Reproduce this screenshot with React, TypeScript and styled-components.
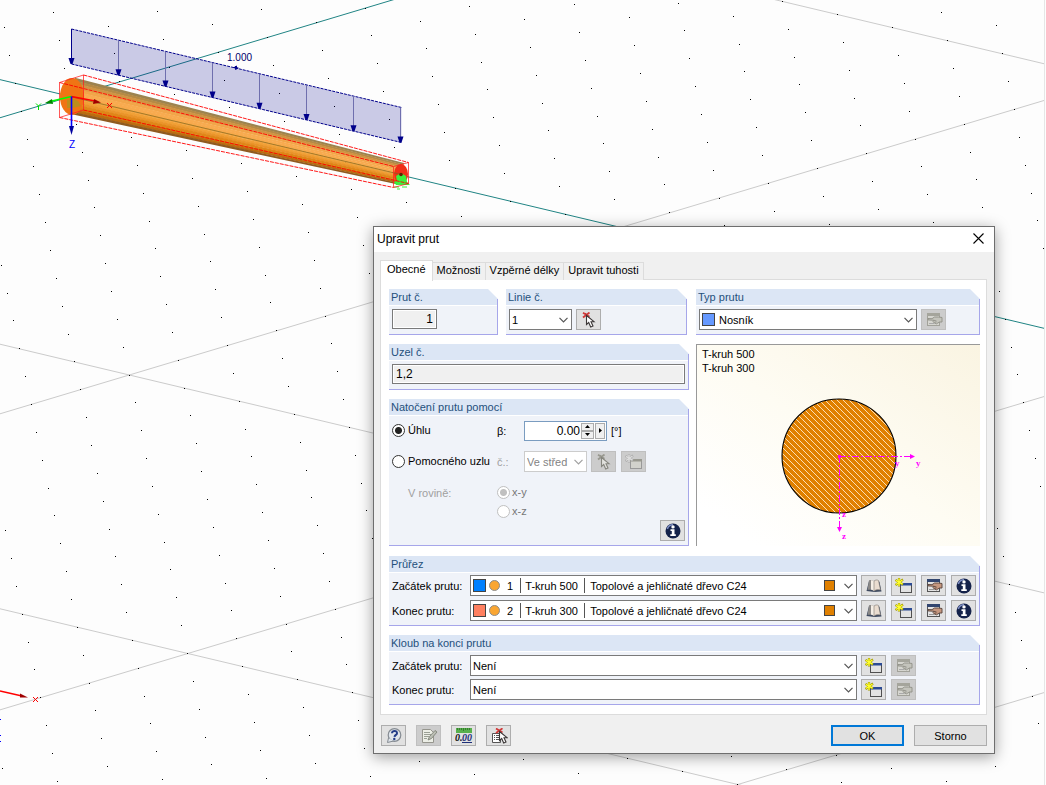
import React from "react";
import styled, { createGlobalStyle, css } from "styled-components";

const GlobalStyle = createGlobalStyle`
  *, *::before, *::after { box-sizing: border-box; }
  html, body, #root { height: 100%; }
  body {
    margin: 0;
    overflow: hidden;
    background: #fdfdfd;
    color: #000;
    font: 11px/14px "Liberation Sans", Arial, sans-serif;
  }
  button, input, select { font: inherit; color: inherit; margin: 0; }
`;

/* ---------- workspace ---------- */

const Workspace = styled.main`
  position: relative;
  min-height: 100vh;
  margin-right: 1px;
  overflow: hidden;
  border-right: 1px solid #e6e6e6;
`;

const Scene = styled.svg`
  position: absolute;
  inset: 0;
  width: 100%;
  height: 100%;
`;

const O = { x: 70.8, y: 96.5 };
const U = { x: 55, y: 13.1 };
const V = { x: 49.15, y: -14.75 };
const gridPoint = (i: number, j: number) => ({
  x: O.x + i * U.x + j * V.x,
  y: O.y + i * U.y + j * V.y,
});

const dots: { x: number; y: number }[] = [];
for (let i = -40; i <= 60; i++) {
  for (let j = -60; j <= 50; j++) {
    const p = gridPoint(i, j);
    if (p.x >= 0 && p.x < 2200 && p.y >= 0 && p.y < 1400) {
      dots.push({ x: Math.floor(p.x), y: Math.floor(p.y) });
    }
  }
}
const dotPath = dots.map((d) => `M${d.x} ${d.y}h1v1h-1z`).join("");

const gridLine = (i1: number, j1: number, i2: number, j2: number) => {
  const a = gridPoint(i1, j1);
  const b = gridPoint(i2, j2);
  return `M${a.x} ${a.y}L${b.x} ${b.y}`;
};
const majors = [-30, -20, -10, 10, 20, 30, 40];
const majorPath = majors
  .map((k) => gridLine(k, -60, k, 60) + gridLine(-60, k, 60, k))
  .join("");
const axisPath = gridLine(0, 0, 0, 60) + gridLine(0, -60, 0, 0) + gridLine(-60, 0, 60, 0);

const beamShades = [
  "#9c8350", "#b58a45", "#cf9444", "#e59d45", "#f2a549", "#f8ab50", "#f8aa4e",
  "#f6a742", "#f1a036", "#ea942a", "#e08618", "#d67c0c", "#bb6c10", "#8f5a20",
];
const beamTop = [[75, 77.8], [404, 163]];
const beamBottom = [[73, 114.5], [398, 184.5]];
const along = (t: number, end: number) =>
  `${beamTop[end][0] + (beamBottom[end][0] - beamTop[end][0]) * t} ${
    beamTop[end][1] + (beamBottom[end][1] - beamTop[end][1]) * t
  }`;

const loadArrows = [0, 1, 2, 3, 4, 5, 6, 7].map((n) => ({
  x: 71.5 + n * 47,
  y: 29 + n * 11.2,
}));

const Model = () => (
  <Scene aria-hidden="true">
    <path d={majorPath} stroke="#cbcbcb" fill="none" />
    <path d={axisPath} stroke="#208484" fill="none" />
    <path d={dotPath} fill="#000" />

    <path d="M71.5 29L401.5 107.5V142.5L71.5 64Z" fill="#00008b" fillOpacity="0.2" />
    <path d="M71.5 29L401.5 107.5M71.5 64L401.5 142.5" stroke="#00008b" strokeDasharray="3 1" />
    {loadArrows.map((a, n) => (
      <g key={a.x}>
        <path d={`M${a.x} ${a.y}v31`} stroke={n === 0 ? "#00008b" : "#6f6fae"} />
        <path d={`M${a.x - 3} ${a.y + 29}h6l-2 6h-2z`} fill="#00008b" />
      </g>
    ))}
    <path d="M233 67.5l4-2v4zM235 66l4 2-4 2z" fill="#00008b" />
    <text x="227" y="61" fontSize="10" fill="#00006b">1.000</text>

    {beamShades.map((c, n) => {
      const t1 = n / beamShades.length;
      const t2 = Math.min(1, (n + 1.2) / beamShades.length);
      return (
        <path
          key={c}
          d={`M${along(t1, 0)}L${along(t1, 1)}L${along(t2, 1)}L${along(t2, 0)}Z`}
          fill={c}
        />
      );
    })}
    <ellipse cx="72" cy="96.5" rx="12" ry="18.5" fill="#f07414" />
    <ellipse cx="401" cy="174" rx="7" ry="10" fill="#f03018" />
    <path d="M72 97L401 174.5" stroke="#7c6420" strokeWidth="0.7" />
    <path d="M67 100l4-1v9h-4zM72 98l6 3 3 5-9 2z" fill="#b8901c" opacity="0.9" />
    <path d="M396 176l5-3 5 3 1 6 3 3h-14l-2-3 3-1z" fill="#3cf03c" />
    <path d="M394 187h5M402 187h5M397 189h3" stroke="#3cf03c" />
    <circle cx="401" cy="174.5" r="1.8" fill="#602000" />

    <g fill="none" stroke="#ff2020" strokeOpacity="0.75">
      <path d="M59.5 82.5L83.5 75V110L59.5 117.5Z" />
      <path d="M393.5 166.5L408.5 162.5V183.5L393.5 187.5Z" />
    </g>
    <path
      d="M83.5 75L408.5 162.5M59.5 82.5L393.5 166.5M83.5 110L408.5 183.5M59.5 117.5L393.5 187.5"
      stroke="#ff0000"
      strokeWidth="0.9"
      strokeDasharray="4 1"
    />

    <path d="M71.5 96.5L52 101" stroke="#00ff00" strokeWidth="1.6" />
    <path d="M45 103l7-4 1 5z" fill="#008a00" />
    <path d="M71.5 96.5L95 101" stroke="#ff0000" strokeWidth="1.6" />
    <path d="M101 102.500l-8 1.500 1-5z" fill="#a00000" />
    <path d="M71.5 96.500V127" stroke="#0000ff" strokeWidth="1.6" />
    <path d="M69 126h5l-2.500 9z" fill="#0000a0" />
    <path d="M36 103.500l2.500 2.500 2.500-2.500M38.500 106v4" stroke="#00e000" fill="none" />
    <path d="M107 103l5 5M112 103l-5 5" stroke="#ff0000" />
    <text x="69" y="148" fontSize="10" fill="#0000ff">Z</text>

    <path d="M0 691L22 696" stroke="#ff0000" strokeWidth="1.4" />
    <path d="M28 697.500l-8-4v4z" fill="#a00000" />
    <path d="M33 697l5 5M38 697l-5 5" stroke="#ff0000" />
    <path d="M0 719.500h1M0 735.500h1M0 741.500h1" stroke="#0000ff" />
  </Scene>
);

/* ---------- dialog frame ---------- */

const Dialog = styled.section`
  position: absolute;
  top: 226px;
  left: 373px;
  right: 49px;
  min-width: 560px;
  background: #f0f0f0;
  border: 1px solid #6e6e6e;
  box-shadow: 0 3px 14px rgba(0, 0, 0, 0.38);
`;

const TitleBar = styled.header`
  display: flex;
  align-items: center;
  justify-content: space-between;
  height: 25px;
  padding: 0 10px 2px 3px;
  background: #fff;
`;

const Title = styled.h1`
  margin: 0;
  font-size: 12px;
  font-weight: 400;
  line-height: 16px;
`;

const CloseButton = styled.button`
  display: flex;
  padding: 0;
  border: 0;
  background: none;
`;

const Tabs = styled.div`
  display: flex;
  align-items: flex-end;
  height: 28px;
  padding: 7px 6px 0;
`;

const Tab = styled.button<{ $active?: boolean }>`
  height: ${(p) => (p.$active ? 21 : 18)}px;
  padding: 0 ${(p) => (p.$active ? 6 : 4)}px ${(p) => (p.$active ? 4 : 3)}px;
  margin-bottom: ${(p) => (p.$active ? -1 : 0)}px;
  border: 1px solid #dcdcdc;
  border-left-width: ${(p) => (p.$active ? 1 : 0)}px;
  border-bottom: 0;
  background: ${(p) => (p.$active ? "#fff" : "#f0f0f0")};
  white-space: nowrap;
  z-index: 1;
`;

const TabPanel = styled.div`
  display: flex;
  flex-direction: column;
  gap: 9px;
  margin: -1px 7px 0 6px;
  padding: 9px 6px 9px 8px;
  border: 1px solid #dcdcdc;
  background: #fff;
`;

const Columns = styled.div`
  display: grid;
  grid-template-columns: 300fr 284fr;
  gap: 7px;
  padding-bottom: 1px;
`;

const Column = styled.div`
  display: flex;
  flex-direction: column;
  gap: 9px;
`;

const PairRow = styled.div`
  display: grid;
  grid-template-columns: 109fr 181fr;
  gap: 8px;
  padding-right: 2px;
`;

const Footer = styled.footer`
  display: flex;
  justify-content: space-between;
  padding: 10px 7px 7px;
`;

const FooterGroup = styled.div`
  display: flex;
  gap: 10px;
`;

const PushButton = styled.button<{ $primary?: boolean }>`
  width: 73px;
  height: 21px;
  padding: 0;
  background: #e1e1e1;
  border: ${(p) => (p.$primary ? "2px solid #0078d7" : "1px solid #adadad")};
`;

/* ---------- groups ---------- */

const GroupBox = styled.section`
  position: relative;
  display: flex;
  flex-direction: column;
  border-bottom: 1px solid #a6a6ea;
  &::after {
    content: "";
    position: absolute;
    top: 10px;
    right: 0;
    bottom: 0;
    border-right: 1px solid #a6a6ea;
  }
`;

const GroupTitle = styled.h2`
  height: 16px;
  margin: 0 0 1px;
  padding: 0 2px;
  background: #dce6f5;
  clip-path: polygon(0 0, calc(100% - 10px) 0, 100% 10px, 100% 100%, 0 100%);
  color: #24507c;
  font-size: 11px;
  font-weight: 400;
  line-height: 16px;
`;

const GroupBody = styled.div<{ $gap?: number; $top?: number }>`
  display: flex;
  flex-direction: column;
  flex: 1;
  gap: ${(p) => p.$gap ?? 3}px;
  padding: ${(p) => p.$top ?? 3}px 4px 4px 3px;
  background: #f0f3f9;
`;

const Group = ({ title, gap, top, children }: {
  title: string; gap?: number; top?: number; children: React.ReactNode;
}) => (
  <GroupBox>
    <GroupTitle>{title}</GroupTitle>
    <GroupBody $gap={gap} $top={top}>{children}</GroupBody>
  </GroupBox>
);

/* ---------- controls ---------- */

const Row = styled.div<{ $alignTop?: boolean }>`
  display: flex;
  align-items: ${(p) => (p.$alignTop ? "flex-start" : "center")};
  gap: 4px;
  min-height: 21px;
`;

const ReadOnlyInput = styled.input<{ $narrow?: boolean }>`
  width: ${(p) => (p.$narrow ? "45px" : "100%")};
  height: 20px;
  padding: 0 3px;
  border: 1px solid #7a7a7a;
  background: #f0f0f0;
  box-shadow: inset 0 0 0 1px #fff;
  font-size: 12px;
  text-align: ${(p) => (p.$narrow ? "right" : "left")};
`;

const ComboFrame = styled.span<{ $width?: number; $disabled?: boolean }>`
  position: relative;
  display: block;
  height: 21px;
  ${(p) => (p.$width ? css`flex: none; width: ${p.$width}px;` : css`flex: 1;`)}
  color: ${(p) => (p.$disabled ? "#838383" : "#000")};
`;

const ComboSelect = styled.select<{ $indent: number }>`
  appearance: none;
  width: 100%;
  height: 100%;
  padding: 0 16px 0 ${(p) => p.$indent}px;
  border: 1px solid #7a7a7a;
  border-radius: 0;
  background: #fff;
  &:disabled { border-color: #ccc; color: inherit; opacity: 1; }
`;

const ComboArrow = styled.svg`
  position: absolute;
  top: 8px;
  right: 4px;
  pointer-events: none;
`;

const ComboDecor = styled.span`
  position: absolute;
  inset: 0 22px 0 3px;
  display: flex;
  align-items: center;
  pointer-events: none;
`;

const Swatch = styled.i<{ $color: string; $small?: boolean }>`
  width: ${(p) => (p.$small ? 11 : 13)}px;
  height: ${(p) => (p.$small ? 11 : 13)}px;
  border: 1px solid #444;
  background: ${(p) => p.$color};
`;

const RoundSwatch = styled.i`
  width: 11px;
  height: 11px;
  margin: 0 20px 0 3px;
  border: 1px solid #8c8c8c;
  border-radius: 50%;
  background: #faa632;
`;

const Divider = styled.i`
  width: 1px;
  height: 15px;
  margin-right: 63px;
  background: #555;
`;

const Spacer = styled.span`
  flex: 1;
`;

const Combo = ({ label, value, width, indent = 2, disabled, decor, id }: {
  label?: string; value: string; width?: number; indent?: number;
  disabled?: boolean; decor?: React.ReactNode; id?: string;
}) => (
  <ComboFrame $width={width} $disabled={disabled}>
    <ComboSelect id={id} aria-label={label} $indent={indent} disabled={disabled}>
      <option>{value}</option>
    </ComboSelect>
    {decor && <ComboDecor>{decor}</ComboDecor>}
    <ComboArrow width="9" height="6" viewBox="0 0 9 6">
      <path d="M.5 .8L4.500 4.800L8.500 .8" fill="none" stroke={disabled ? "#a0a0a0" : "#555"} strokeWidth="1.2" />
    </ComboArrow>
  </ComboFrame>
);

const IconButton = styled.button`
  display: flex;
  align-items: center;
  justify-content: center;
  flex: none;
  width: 25px;
  height: 21px;
  padding: 0;
  border: 1px solid #adadad;
  background: #e1e1e1;
  &:disabled { border-color: #bfbfbf; background: #ccc; }
`;

const ButtonStrip = styled.div<{ $count: number }>`
  display: flex;
  gap: 5px;
  width: ${(p) => p.$count * 30 - 5}px;
`;

const RowLabel = styled.label`
  flex: none;
  width: 74px;
`;

const Radio = styled.input`
  appearance: none;
  flex: none;
  width: 13px;
  height: 13px;
  border: 1px solid #333;
  border-radius: 50%;
  background: #fff;
  &:checked { background: radial-gradient(circle, #222 0 3px, #fff 4px); }
  &:disabled { border-color: #c0c0c0; }
  &:checked:disabled { background: radial-gradient(circle, #c0c0c0 0 3px, #fff 4px); }
`;

const RotationGrid = styled.div`
  display: grid;
  grid-template-columns: 105px 27px 1fr;
  align-items: center;
  row-gap: 10px;
`;

const RadioLabel = styled.label<{ $muted?: boolean }>`
  display: flex;
  align-items: center;
  gap: ${(p) => (p.$muted ? 2 : 3)}px;
  color: ${(p) => (p.$muted ? "#777" : "#000")};
  line-height: 13px;
  white-space: nowrap;
`;

const Muted = styled.span<{ $indent?: boolean }>`
  padding-left: ${(p) => (p.$indent ? 16 : 0)}px;
  color: #a0a0a0;
`;

const PlaneRow = styled.div`
  display: grid;
  grid-template-columns: 105px 1fr;
  align-items: start;
  padding-top: 12px;
`;

const PlaneOptions = styled.div`
  display: flex;
  flex-direction: column;
  gap: 6px;
`;

const InfoCorner = styled.div`
  display: flex;
  justify-content: flex-end;
`;

const AngleBox = styled.span`
  display: flex;
  width: 83px;
  height: 20px;
  padding: 1px;
  border: 1px solid #7a9cc0;
  background: #fff;
`;

const AngleInput = styled.input`
  flex: 1;
  min-width: 0;
  padding: 0 1px 0 0;
  border: 0;
  background: none;
  font-size: 12px;
  text-align: right;
  outline: none;
`;

const SpinColumn = styled.span`
  display: flex;
  flex-direction: column;
`;

const SpinButton = styled.button<{ $tall?: boolean }>`
  display: flex;
  align-items: center;
  justify-content: center;
  width: ${(p) => (p.$tall ? 10 : 13)}px;
  height: ${(p) => (p.$tall ? 16 : 8)}px;
  margin-left: ${(p) => (p.$tall ? 1 : 0)}px;
  padding: 0;
  border: 1px solid #acacac;
  background: #f0f0f0;
`;

/* ---------- section preview ---------- */

const Preview = styled.div`
  display: flex;
  flex-direction: column;
  flex: 1;
  padding: 2px 5px 0;
  border-top: 1px solid #999;
  border-left: 1px solid #999;
  background: linear-gradient(35deg, #fff 10%, #fefcf3 50%, #faf4e2);
`;

const PreviewText = styled.p`
  margin: 0;
`;

const PreviewDrawing = styled.svg`
  align-self: center;
  flex: none;
`;

const SectionDrawing = () => (
  <PreviewDrawing width="180" height="166" viewBox="-90 -81 180 166" aria-hidden="true">
    <defs>
      <pattern id="hatch" width="6" height="6" patternUnits="userSpaceOnUse">
        <rect width="6" height="6" fill="#e08000" />
        <path d="M-1 -1L7 7M-1 5L1 7M5 -1L7 1" stroke="#ffe9c8" strokeWidth="0.9" />
      </pattern>
    </defs>
    <circle r="57" fill="url(#hatch)" stroke="#000" strokeWidth="1.1" />
    <g stroke="#ff00ff" strokeDasharray="7 2 2 2">
      <path d="M0 0.500H72M0.500 0V72" />
    </g>
    <g fill="#ff00ff">
      <rect x="-1" y="-1" width="3" height="3" />
      <path d="M71 -2v5l5-2.500zM-2 71h5l-2.500 5z" />
      <g fontFamily="Liberation Serif, serif" fontWeight="700" fontSize="9">
        <text x="56" y="10">y</text>
        <text x="77" y="10">y</text>
        <text x="3" y="61">z</text>
        <text x="3" y="83">z</text>
      </g>
    </g>
  </PreviewDrawing>
);

/* ---------- icons ---------- */

const Icon = ({ children }: { children: React.ReactNode }) => (
  <svg width="18" height="16" viewBox="0 0 18 16" aria-hidden="true">
    {children}
  </svg>
);

const Cursor = ({ dx = 0, faded }: { dx?: number; faded?: boolean }) => (
  <path
    transform={`translate(${dx} 0)`}
    d="M6.500 3.500v9l2.200-2 2 4.500 2.300-1-2-4.300h3z"
    fill={faded ? "#e2e2de" : "#fff"}
    stroke={faded ? "#85857e" : "#3c3838"}
    strokeWidth="1.100"
  />
);

const PickIcon = ({ faded }: { faded?: boolean }) => (
  <Icon>
    <path d="M3 .8l6.500 4M9.500 .5L3 5.500M5 1.500l3 3" stroke={faded ? "#98988f" : "#d03838"} strokeWidth="1.800" />
    <Cursor faded={faded} />
  </Icon>
);

const NewIcon = ({ faded }: { faded?: boolean }) => (
  <Icon>
    <rect x="5.500" y="5.500" width="11" height="9" fill={faded ? "#d2d2cc" : "#e2e2e2"} stroke={faded ? "#999" : "#505050"} />
    <rect x="5" y="5" width="12" height="2.500" fill={faded ? "#999990" : "#2b4a94"} />
    <path d="M4 0v8.500M.5 2l7.500 4.500M8 1.500L.5 7" stroke={faded ? "#aaa" : "#a39c00"} strokeWidth="2.200" />
    <path d="M4 .5v7.500M1 2.300l6.500 3.900M7.500 2L1 6.500" stroke={faded ? "#ddd" : "#ffff30"} strokeWidth="1.400" />
  </Icon>
);

const EditIcon = ({ faded }: { faded?: boolean }) => (
  <Icon>
    <rect x="2.500" y="1.500" width="12" height="12" fill={faded ? "#d6d6d0" : "#e4e4e4"} stroke={faded ? "#a2a29a" : "#555"} />
    <rect x="2" y="1" width="13" height="3" fill={faded ? "#a5a59c" : "#31456f"} />
    <path d="M4 11.500h5" stroke={faded ? "#aaa" : "#999"} />
    <path
      d="M3 6.500l4 .2 2.500-1.700h4l3.500 .5v4.500h-2.500l-3 1.800-2.500-1-1-1.500L9 8.300l-6-.4z"
      fill={faded ? "#c4c4bc" : "#c69880"}
      stroke={faded ? "#8e8e86" : "#55423a"}
      strokeWidth="0.900"
    />
    <path d="M9 8.300l2.500 .7M9.500 10.200l2-.2" stroke={faded ? "#8e8e86" : "#55423a"} strokeWidth="0.800" />
  </Icon>
);

const BookIcon = () => (
  <Icon>
    <path d="M1.500 13L4 3l1-.500L8.500 12 9 13.500l1-1.500L13.500 3l1 1 2 9.500-7 .5z" fill="#3e4a60" />
    <path d="M4 2.500c2-.8 3.500-.5 5 .5v10c-1.500-1.500-4-1.500-6.500-1z" fill="#8a8886" />
    <path d="M6 2.300c1.500-.2 2.300.2 3 .7v10c-1-1-2-1.200-3-1.300z" fill="#f6efe6" />
    <path d="M9 3c1.500-1.200 3-1.300 4.500-.5l2 9.500c-2.500-.6-4.500-.5-6.500 1z" fill="#eaddd0" stroke="#7e7770" strokeWidth="0.600" />
  </Icon>
);

const InfoIcon = () => (
  <Icon>
    <circle cx="9" cy="8" r="7.500" fill="#14224a" />
    <path d="M3.300 6A6 6 0 0 1 9 1.800" stroke="#7f8fc4" strokeWidth="1.600" fill="none" />
    <circle cx="9" cy="3.900" r="1.700" fill="#fff" />
    <path d="M6.500 6.300h4v5h1.300v1.700H6.300v-1.700h1.500V8H6.500z" fill="#fff" />
  </Icon>
);

const HelpIcon = () => (
  <Icon>
    <circle cx="9.500" cy="7" r="6.300" fill="#dfe5ec" stroke="#858b92" strokeWidth="1.200" />
    <path d="M3.500 10l-1 4.500 6-1.500" fill="#dfe5ec" stroke="#858b92" />
    <path d="M7 5.300c0-3.200 5.300-3 5 0-.2 1.600-2.300 1.600-2.500 3.500" fill="none" stroke="#233d88" strokeWidth="2" />
    <circle cx="9.300" cy="11" r="1.200" fill="#233d88" />
  </Icon>
);

const NoteIcon = () => (
  <Icon>
    <path d="M2.500 1.500h8l3 3v10h-11z" fill="#eceee6" stroke="#96968e" />
    <path d="M4 4.500h6M4 6.500h7M4 8.500h5M4 10.500h3" stroke="#9a9f94" />
    <path d="M8 12l1.500-3.500L15 2.500l2 1.500-5.500 6.500z" fill="#bcbfb5" stroke="#7e8277" strokeWidth="0.900" />
  </Icon>
);

const UnitsIcon = () => (
  <Icon>
    <rect x="1" y="0" width="16" height="5" fill="#58b04c" />
    <path d="M2.500 0v2M4.500 0v2M6.500 0v2M8.500 0v3M10.500 0v2M12.500 0v2M14.500 0v2" stroke="#2c7028" strokeWidth="0.800" />
    <text x="0" y="13" fontFamily="Liberation Serif, serif" fontStyle="italic" fontWeight="700" fontSize="10" fill="#111">0.</text>
    <text x="7" y="13" fontFamily="Liberation Serif, serif" fontStyle="italic" fontWeight="700" fontSize="10" fill="#1e2f78">00</text>
    <path d="M7 14.500h10" stroke="#1e2f78" />
  </Icon>
);

const ListPickIcon = () => (
  <Icon>
    <path d="M2.500 5.500h8v9h-8z" fill="#fff" stroke="#555" />
    <path d="M4 7.500h1M6 7.500h3M4 9.500h1M6 9.500h3M4 11.500h1M6 11.500h3" stroke="#555" />
    <path d="M6 .5l6.500 4M12.500 .3L6 5" stroke="#d03838" strokeWidth="1.800" />
    <Cursor dx={3} />
  </Icon>
);

/* ---------- dialog content ---------- */

const gap4 = "\u00a0\u00a0\u00a0\u00a0";

const SectionRow = ({ id, label, color, no, name }: {
  id: string; label: string; color: string; no: string; name: string;
}) => (
  <Row>
    <RowLabel htmlFor={id}>{label}</RowLabel>
    <Combo
      id={id}
      indent={36}
      value={`${no}${gap4}${name}${gap4}Topolové a jehličnaté dřevo C24`}
      decor={
        <>
          <Swatch $color={color} />
          <RoundSwatch />
          <Divider />
          <Divider />
          <Spacer />
          <Swatch $small $color="#e08000" />
        </>
      }
    />
    <ButtonStrip $count={4}>
      <IconButton aria-label="Knihovna průřezů"><BookIcon /></IconButton>
      <IconButton aria-label="Nový průřez"><NewIcon /></IconButton>
      <IconButton aria-label="Upravit průřez"><EditIcon /></IconButton>
      <IconButton aria-label="Informace o průřezu"><InfoIcon /></IconButton>
    </ButtonStrip>
  </Row>
);

const HingeRow = ({ id, label }: { id: string; label: string }) => (
  <Row>
    <RowLabel htmlFor={id}>{label}</RowLabel>
    <Combo id={id} value="Není" />
    <ButtonStrip $count={4}>
      <IconButton aria-label="Nový kloub"><NewIcon /></IconButton>
      <IconButton aria-label="Upravit kloub" disabled><EditIcon faded /></IconButton>
    </ButtonStrip>
  </Row>
);

export default function App() {
  return (
    <>
      <GlobalStyle />
      <Workspace>
        <Model />
        <Dialog role="dialog" aria-labelledby="dialog-title">
          <TitleBar>
            <Title id="dialog-title">Upravit prut</Title>
            <CloseButton aria-label="Zavřít">
              <svg width="11" height="11" viewBox="0 0 11 11">
                <path d="M.5 .5l10 10M10.500 .5l-10 10" stroke="#000" strokeWidth="1.100" />
              </svg>
            </CloseButton>
          </TitleBar>
          <Tabs role="tablist">
            <Tab role="tab" aria-selected="true" $active>Obecné</Tab>
            <Tab role="tab">Možnosti</Tab>
            <Tab role="tab">Vzpěrné délky</Tab>
            <Tab role="tab">Upravit tuhosti</Tab>
          </Tabs>
          <TabPanel role="tabpanel">
            <Columns>
              <Column>
                <PairRow>
                  <Group title="Prut č.">
                    <Row $alignTop><ReadOnlyInput $narrow readOnly aria-label="Prut č." defaultValue="1" /></Row>
                  </Group>
                  <Group title="Linie č.">
                    <Row>
                      <Combo label="Linie č." width={63} value="1" />
                      <IconButton aria-label="Vybrat linii"><PickIcon /></IconButton>
                    </Row>
                  </Group>
                </PairRow>
                <Group title="Uzel č.">
                  <Row $alignTop><ReadOnlyInput readOnly aria-label="Uzel č." defaultValue="1,2" /></Row>
                </Group>
                <Group title="Natočení prutu pomocí" gap={2} top={4}>
                  <RotationGrid>
                    <RadioLabel>
                      <Radio type="radio" name="rotation" defaultChecked />Úhlu
                    </RadioLabel>
                    <label htmlFor="angle">β:</label>
                    <Row>
                      <AngleBox>
                        <AngleInput id="angle" defaultValue="0.00" />
                        <SpinColumn>
                          <SpinButton aria-label="Zvýšit">
                            <svg width="5" height="3"><path d="M0 3h5L2.500 0z" /></svg>
                          </SpinButton>
                          <SpinButton aria-label="Snížit">
                            <svg width="5" height="3"><path d="M0 0h5L2.500 3z" /></svg>
                          </SpinButton>
                        </SpinColumn>
                        <SpinButton $tall aria-label="Další">
                          <svg width="3" height="5"><path d="M0 0v5L3 2.500z" /></svg>
                        </SpinButton>
                      </AngleBox>
                      <span>[°]</span>
                    </Row>
                    <RadioLabel>
                      <Radio type="radio" name="rotation" />Pomocného uzlu
                    </RadioLabel>
                    <Muted>č.:</Muted>
                    <Row>
                      <Combo label="č." width={63} value="Ve střed" disabled />
                      <ButtonStrip $count={2}>
                        <IconButton aria-label="Vybrat uzel" disabled><PickIcon faded /></IconButton>
                        <IconButton aria-label="Nový uzel" disabled><NewIcon faded /></IconButton>
                      </ButtonStrip>
                    </Row>
                  </RotationGrid>
                  <PlaneRow>
                    <Muted $indent>V rovině:</Muted>
                    <PlaneOptions>
                      <RadioLabel $muted>
                        <Radio type="radio" name="plane" defaultChecked disabled />x-y
                      </RadioLabel>
                      <RadioLabel $muted>
                        <Radio type="radio" name="plane" disabled />x-z
                      </RadioLabel>
                    </PlaneOptions>
                  </PlaneRow>
                  <InfoCorner>
                    <IconButton aria-label="Informace"><InfoIcon /></IconButton>
                  </InfoCorner>
                </Group>
              </Column>
              <Column>
                <Group title="Typ prutu">
                  <Row>
                    <Combo label="Typ prutu" width={218} value="Nosník" indent={19} decor={<Swatch $color="#6699ff" />} />
                    <IconButton aria-label="Upravit typ prutu" disabled><EditIcon faded /></IconButton>
                  </Row>
                </Group>
                <Preview>
                  <PreviewText>T-kruh 500</PreviewText>
                  <PreviewText>T-kruh 300</PreviewText>
                  <SectionDrawing />
                </Preview>
              </Column>
            </Columns>
            <Group title="Průřez" gap={4} top={2}>
              <SectionRow id="sec-start" label="Začátek prutu:" color="#0080ff" no="1" name="T-kruh 500" />
              <SectionRow id="sec-end" label="Konec prutu:" color="#ff8060" no="2" name="T-kruh 300" />
            </Group>
            <Group title="Kloub na konci prutu">
              <HingeRow id="hinge-start" label="Začátek prutu:" />
              <HingeRow id="hinge-end" label="Konec prutu:" />
            </Group>
          </TabPanel>
          <Footer>
            <FooterGroup>
              <IconButton aria-label="Nápověda"><HelpIcon /></IconButton>
              <IconButton aria-label="Komentář" disabled><NoteIcon /></IconButton>
              <IconButton aria-label="Jednotky"><UnitsIcon /></IconButton>
              <IconButton aria-label="Vybrat ze seznamu"><ListPickIcon /></IconButton>
            </FooterGroup>
            <FooterGroup>
              <PushButton $primary>OK</PushButton>
              <PushButton>Storno</PushButton>
            </FooterGroup>
          </Footer>
        </Dialog>
      </Workspace>
    </>
  );
}
